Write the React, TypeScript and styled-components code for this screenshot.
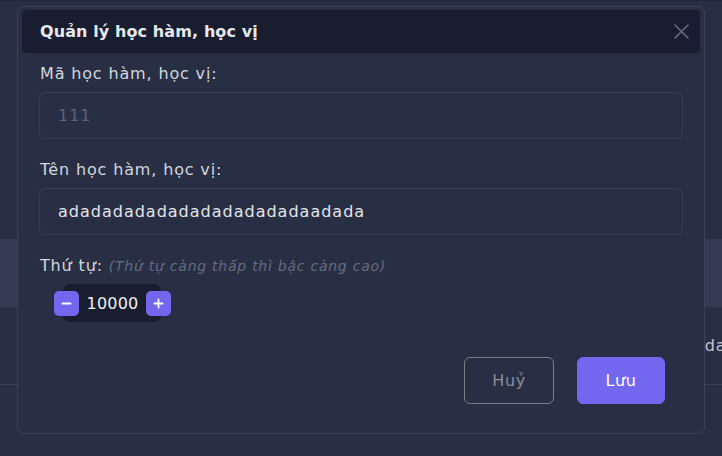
import React from "react";
import styled, { createGlobalStyle } from "styled-components";

const GlobalStyle = createGlobalStyle`
  html, body { margin: 0; padding: 0; background: #282f44; }
  body { font-family: "DejaVu Sans", "Noto Sans", sans-serif; }
  * { box-sizing: border-box; }
`;

const Page = styled.div`
  position: relative;
  width: 722px;
  height: 456px;
  overflow: hidden;
  background: #282f44;
`;

const Backdrop = styled.div`
  display: flex;
  flex-direction: column;
  height: 100%;
  border-top: 1px solid #1f2436;
`;

const Spacer = styled.div<{ $h: number }>`
  height: ${(p) => p.$h}px;
  flex: none;
`;

const HighlightRow = styled.div`
  height: 69px;
  flex: none;
  background: #333a53;
  border-bottom: 1px solid #2c3248;
`;

const DataRow = styled.div`
  height: 77px;
  flex: none;
  display: grid;
  grid-template-columns: 694px 1fr;
  align-items: center;
  border-bottom: 1px solid #3b4258;
  color: #c3c6d0;
  font-size: 16px;
  letter-spacing: 0.85px;
`;

const Cell = styled.div`
  white-space: nowrap;
  overflow: hidden;
  padding-bottom: 2px;
`;

const Modal = styled.div`
  position: absolute;
  left: 17px;
  top: 6px;
  width: 688px;
  height: 428px;
  border: 1px solid #3b4258;
  border-radius: 7px;
  background: #282f44;
  padding: 3px 4px 0 4px;
  display: flex;
  flex-direction: column;
`;

const Header = styled.div`
  height: 43px;
  background: #181d30;
  border-radius: 4px;
  display: flex;
  align-items: center;
  justify-content: space-between;
  padding: 0 11px 1px 18px;
`;

const Title = styled.h2`
  margin: 0;
  font-size: 16px;
  font-weight: 700;
  color: #e6e8ee;
  letter-spacing: 0.1px;
`;

const CloseButton = styled.button`
  background: none;
  border: none;
  padding: 0;
  width: 16px;
  height: 16px;
  display: flex;
  align-items: center;
  justify-content: center;
  color: #676c7e;
  cursor: pointer;
`;

const Body = styled.div`
  display: flex;
  flex-direction: column;
  padding: 9px 17px 0 17px;
`;

const Label = styled.label<{ $top?: number }>`
  display: block;
  margin: ${(p) => p.$top ?? 0}px 0 6px 1px;
  font-size: 16px;
  line-height: 24px;
  color: #d3d6de;
  letter-spacing: 0.85px;
`;

const Hint = styled.span`
  font-style: italic;
  font-size: 14px;
  color: #666c80;
  letter-spacing: 0.75px;
`;

const Input = styled.input<{ $muted?: boolean }>`
  height: 47px;
  width: 100%;
  border: 1px solid #363d53;
  border-radius: 6px;
  background: #282f44;
  padding: 0 18px;
  font-family: inherit;
  font-size: 16px;
  letter-spacing: 1px;
  color: ${(p) => (p.$muted ? "#5c6276" : "#e2e4ea")};
  outline: none;
  &:disabled { opacity: 1; -webkit-text-fill-color: #5c6276; }
`;

const Pill = styled.div`
  display: flex;
  align-items: center;
  align-self: flex-start;
  margin-left: 24px;
  width: 98px;
  padding: 7px 0 6px;
  background: #181d30;
  border-radius: 7px;
`;

const StepButton = styled.button<{ $side: "left" | "right" }>`
  width: 25px;
  height: 25px;
  flex: none;
  border: none;
  border-radius: 5px;
  background: #7367f0;
  color: #ffffff;
  padding: 0;
  display: flex;
  align-items: center;
  justify-content: center;
  margin-left: ${(p) => (p.$side === "left" ? "-9px" : "0")};
  margin-right: ${(p) => (p.$side === "right" ? "-10px" : "0")};
`;

const Value = styled.span`
  flex: 1;
  text-align: center;
  font-size: 16px;
  color: #eef0f5;
  letter-spacing: 0.2px;
  padding-bottom: 1px;
`;

const Footer = styled.div`
  display: flex;
  justify-content: flex-end;
  gap: 23px;
  margin-top: 35px;
  padding-right: 18px;
`;

const Button = styled.button<{ $primary?: boolean }>`
  height: 47px;
  width: ${(p) => (p.$primary ? 88 : 90)}px;
  border-radius: 6px;
  font-family: inherit;
  font-size: 16px;
  letter-spacing: 0.6px;
  border: 1px solid ${(p) => (p.$primary ? "#7367f0" : "#7b7e89")};
  background: ${(p) => (p.$primary ? "#7367f0" : "transparent")};
  color: ${(p) => (p.$primary ? "#ffffff" : "#8b8e97")};
  cursor: pointer;
`;

const CloseIcon = () => (
  <svg width="15" height="15" viewBox="0 0 15 15" fill="none">
    <path d="M1 1L14 14M14 1L1 14" stroke="currentColor" strokeWidth="1.6" strokeLinecap="round" />
  </svg>
);

const MinusIcon = () => (
  <svg width="11" height="11" viewBox="0 0 11 11">
    <path d="M1.5 5.5H9.5" stroke="currentColor" strokeWidth="2" strokeLinecap="round" />
  </svg>
);

const PlusIcon = () => (
  <svg width="11" height="11" viewBox="0 0 11 11">
    <path d="M1.5 5.5H9.5M5.5 1.5V9.5" stroke="currentColor" strokeWidth="1.8" strokeLinecap="round" />
  </svg>
);

export default function App() {
  return (
    <>
      <GlobalStyle />
      <Page>
        <Backdrop>
          <Spacer $h={238} />
          <HighlightRow />
          <DataRow>
            <span />
            <Cell>adadadadadadadadadadadaadada</Cell>
          </DataRow>
        </Backdrop>
        <Modal>
          <Header>
            <Title>Quản lý học hàm, học vị</Title>
            <CloseButton aria-label="Đóng">
              <CloseIcon />
            </CloseButton>
          </Header>
          <Body>
            <Label>Mã học hàm, học vị:</Label>
            <Input $muted disabled value="111" readOnly />
            <Label $top={19}>Tên học hàm, học vị:</Label>
            <Input value="adadadadadadadadadadadaadada" readOnly />
            <Label $top={19}>
              Thứ tự: <Hint>(Thứ tự càng thấp thì bậc càng cao)</Hint>
            </Label>
            <Pill>
              <StepButton $side="left" aria-label="Giảm">
                <MinusIcon />
              </StepButton>
              <Value>10000</Value>
              <StepButton $side="right" aria-label="Tăng">
                <PlusIcon />
              </StepButton>
            </Pill>
            <Footer>
              <Button>Huỷ</Button>
              <Button $primary>Lưu</Button>
            </Footer>
          </Body>
        </Modal>
      </Page>
    </>
  );
}
